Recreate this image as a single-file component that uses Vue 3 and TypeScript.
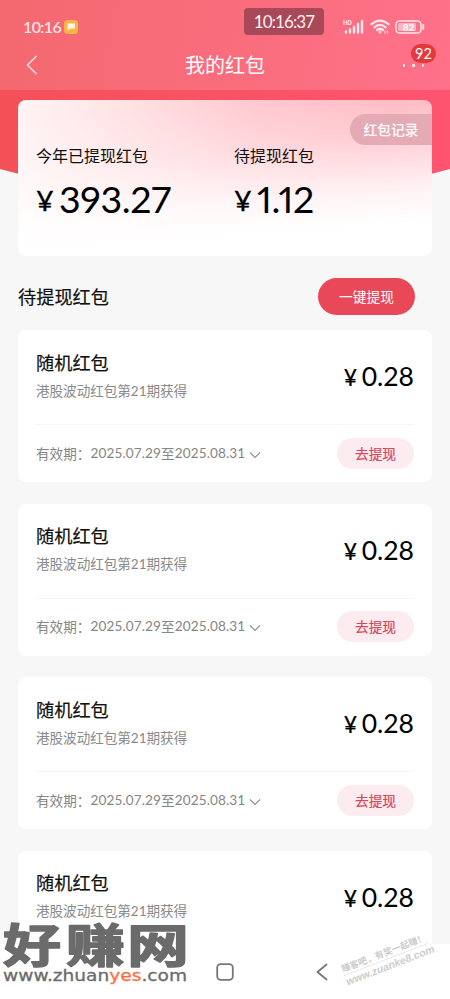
<script setup lang="ts">
import { ref } from 'vue';

type Packet = {
  id: number;
  title: string;
  source: string;
  amount: string;
  start: string;
  end: string;
};

const totals = [
  { label: '今年已提现红包', amount: '393.27' },
  { label: '待提现红包', amount: '1.12' },
];

const packets = ref<Packet[]>(
  [1, 2, 3, 4].map((id) => ({
    id,
    title: '随机红包',
    source: '港股波动红包第21期获得',
    amount: '0.28',
    start: '2025.07.29',
    end: '2025.08.31',
  }))
);

const opened = ref<number | null>(null);

const toggle = (id: number) => {
  opened.value = opened.value === id ? null : id;
};
</script>

<template>
  <div class="screen">
    <header class="header">
      <div class="status">
        <span class="status-time">10:16</span>
        <svg class="status-app" viewBox="0 0 14 14">
          <rect width="14" height="14" rx="3.5" fill="#f6b546" />
          <path d="M3.5 3.5h7.5v5H7l-3.5 2z" fill="#fff8e4" />
        </svg>
        <svg class="signal" viewBox="0 0 22 15">
          <text x="0" y="5.5" class="hd">HD</text>
          <path d="M3 12.5v1M7 10.5v3M11 8v5.5M15 5v8.5M19 2v11.5" stroke="#ffe9ee" stroke-width="2.4" stroke-linecap="round" />
        </svg>
        <svg class="wifi" viewBox="0 0 20 15">
          <g fill="none" stroke="#ffe9ee" stroke-width="2.2" stroke-linecap="round">
            <path d="M1.5 5.2Q10-2 18.5 5.2" />
            <path d="M4.3 8.3Q10 3.5 15.7 8.3" />
            <path d="M7 11Q10 8.8 13 11" />
          </g>
          <circle cx="10" cy="13" r="1.5" fill="#ffe9ee" />
          <path d="M15 11.5v3M17.5 11.5v3" stroke="#ffe9ee" />
        </svg>
        <svg class="battery" viewBox="0 0 30 14">
          <rect x="1" y="1" width="25" height="12" rx="3.5" fill="none" stroke="#ffe4ea" stroke-width="1.5" />
          <rect x="3" y="3" width="18" height="8" rx="1.5" fill="#ffb3c0" />
          <path d="M28.3 5v4" stroke="#ffe4ea" stroke-width="1.8" stroke-linecap="round" />
          <text x="13.5" y="10.6" text-anchor="middle" class="level">82</text>
        </svg>
      </div>
      <div class="clock">10:16:37</div>
      <div class="navbar">
        <svg class="back" viewBox="0 0 12 20">
          <path d="M10.5 1 1.5 10l9 9" fill="none" stroke="#ffdfe3" stroke-width="1.5" />
        </svg>
        <h1 class="title">我的红包</h1>
        <div class="more">
          <i></i><i></i><i></i>
          <span class="badge">92</span>
        </div>
      </div>
    </header>

    <main class="content">
      <svg class="backdrop" viewBox="0 0 450 96" preserveAspectRatio="none">
        <defs>
          <linearGradient id="backdropFill">
            <stop offset="0" stop-color="#f45058" />
            <stop offset="1" stop-color="#ff5470" />
          </linearGradient>
        </defs>
        <path d="M0 0H450V79Q340 109 225 109T0 79Z" fill="url(#backdropFill)" />
      </svg>

      <section class="summary">
        <button class="record">红包记录</button>
        <div v-for="total in totals" :key="total.label" class="total">
          <div class="total-label">{{ total.label }}</div>
          <div class="total-amount"><span class="yen">¥</span>{{ total.amount }}</div>
        </div>
      </section>

      <div class="section-head">
        <h2>待提现红包</h2>
        <button class="withdraw-all">一键提现</button>
      </div>

      <div class="list">
        <article v-for="item in packets" :key="item.id" class="card">
          <div class="card-main">
            <div>
              <h3>{{ item.title }}</h3>
              <p>{{ item.source }}</p>
            </div>
            <div class="amount"><span class="yen">¥</span>{{ item.amount }}</div>
          </div>
          <div class="card-foot">
            <div class="validity" @click="toggle(item.id)">
              <span>有效期：</span><span class="date">{{ item.start }}</span><span>至</span><span class="date">{{ item.end }}</span>
              <svg class="arrow" :class="{ up: opened === item.id }" viewBox="0 0 12 8">
                <path d="M1 1.5 6 6.5l5-5" fill="none" stroke="#929292" stroke-width="1.2" />
              </svg>
            </div>
            <button class="withdraw">去提现</button>
          </div>
        </article>
      </div>
    </main>

    <footer class="system-bar">
      <svg class="home" viewBox="0 0 18 18">
        <rect x="1.2" y="1.2" width="15.6" height="15.6" rx="3.5" fill="none" stroke="#777" stroke-width="1.8" />
      </svg>
      <svg class="system-back" viewBox="0 0 12 18">
        <path d="M10.5 1.5 1.5 9l9 7.5" fill="none" stroke="#777" stroke-width="1.8" stroke-linecap="round" stroke-linejoin="round" />
      </svg>
    </footer>

    <svg class="site-mark" viewBox="0 0 195 70">
      <g class="site-name">
        <text x="3" y="42" textLength="58" lengthAdjust="spacingAndGlyphs">好</text>
        <text x="66" y="42" textLength="59" lengthAdjust="spacingAndGlyphs">赚</text>
        <text x="127" y="42" textLength="62" lengthAdjust="spacingAndGlyphs">网</text>
      </g>
      <text x="3" y="60.5" textLength="184" lengthAdjust="spacingAndGlyphs" class="site-url">www.zhuan<tspan class="yes">yes</tspan>.com</text>
    </svg>

    <div class="forum-mark">
      <div class="forum-slogan">赚客吧，有奖一起赚！</div>
      <div class="forum-url">www.zuanke8.com</div>
    </div>
  </div>
</template>

<style>
body {
  margin: 0;
  overflow: hidden;
}
</style>

<style scoped>
.screen {
  position: relative;
  display: flex;
  flex-direction: column;
  width: 450px;
  height: 999px;
  overflow: hidden;
  background: #f7f7f7;
  color: #111;
  font-family: Lato, "Noto Sans CJK SC", sans-serif;
}

h1,
h2,
h3,
p {
  margin: 0;
  font-weight: 400;
}

button {
  padding: 0;
  border: 0;
  font-family: inherit;
}

.header {
  position: relative;
  flex: none;
  height: 90px;
  box-sizing: border-box;
  padding-top: 14px;
  background: linear-gradient(100deg, #f4686f, #ff7189);
}

.status {
  display: flex;
  align-items: center;
  height: 25px;
  padding: 0 25px 0 23px;
}

.status-time {
  width: 38px;
  color: #ffe9ec;
  font: 500 16px/25px Lato, sans-serif;
  letter-spacing: -0.6px;
}

.status-app {
  width: 14px;
  height: 14px;
  margin-left: 3px;
}

.signal {
  width: 22px;
  height: 15px;
  margin-left: auto;
}

.hd {
  fill: #ffe9ee;
  font: 700 6px Inter, sans-serif;
}

.wifi {
  width: 20px;
  height: 15px;
  margin: 0 5px;
}

.battery {
  width: 30px;
  height: 14px;
}

.level {
  fill: #fff;
  font: 700 9.5px Inter, sans-serif;
}

.clock {
  position: absolute;
  top: 8px;
  left: 244px;
  width: 80px;
  height: 27px;
  border-radius: 4px;
  background: #a94858;
  color: #fff0f2;
  font: 400 17px/27px Lato, sans-serif;
  letter-spacing: -0.9px;
  text-align: center;
}

.navbar {
  display: grid;
  grid-template-columns: 1fr auto 1fr;
  align-items: center;
  height: 51px;
  padding: 0 26px;
}

.back {
  width: 12px;
  height: 20px;
}

.title {
  color: #fff;
  font-size: 20px;
  line-height: 30px;
}

.more {
  position: relative;
  display: flex;
  justify-self: end;
  gap: 7px;
  margin-top: 2px;
}

.more i {
  width: 2.5px;
  height: 3px;
  border-radius: 1px;
  background: #fff0f2;
}

.badge {
  position: absolute;
  right: -12px;
  top: -20px;
  width: 25px;
  height: 19px;
  border-radius: 9.5px;
  background: #e4393c;
  color: #fff;
  font-size: 14.5px;
  line-height: 19px;
  text-align: center;
}

.content {
  position: relative;
  flex: 1;
  min-height: 0;
  padding: 10px 18px 0;
  overflow: hidden;
}

.backdrop {
  position: absolute;
  top: 0;
  left: 0;
  width: 450px;
  height: 96px;
}

.summary {
  position: relative;
  display: grid;
  grid-template-columns: 198px 1fr;
  align-items: start;
  height: 156px;
  box-sizing: border-box;
  padding: 44px 18px 0;
  border-radius: 8px;
  background:
    linear-gradient(176deg, rgba(255, 255, 255, 0) 10%, rgba(255, 255, 255, 0.3) 35%, rgba(255, 255, 255, 0.85) 65%, #fff 82%),
    linear-gradient(100deg, #fff4f4 0%, #ffe2e4 25%, #ffc8cf 55%, #ffb9c2 85%);
}

.record {
  position: absolute;
  top: 14px;
  right: 0;
  width: 82px;
  height: 31px;
  border-radius: 16px 0 0 16px;
  background: #e5abb5;
  color: #fff;
  font-size: 13.7px;
  font-weight: 500;
  line-height: 31px;
}

.total-label {
  font-size: 16px;
  line-height: 24px;
}

.total-amount {
  margin-top: 10px;
  color: #000;
  font: 400 37.5px/42px Lato, sans-serif;
  font-variant-numeric: proportional-nums;
  letter-spacing: -0.3px;
  white-space: nowrap;
}

.total-amount .yen {
  display: inline-block;
  width: 23px;
  font-size: 27px;
  vertical-align: 2px;
  line-height: 1;
  -webkit-text-stroke: 0.4px #000;
}

.section-head {
  display: flex;
  align-items: center;
  justify-content: space-between;
  height: 37px;
  margin-top: 22px;
  padding-right: 17px;
}

.section-head h2 {
  margin-top: -2px;
  font-size: 18.2px;
  -webkit-text-stroke: 0.2px #111;
}

.withdraw-all {
  width: 97px;
  height: 37px;
  padding-bottom: 2px;
  border-radius: 19px;
  background: #e94858;
  color: #fff;
  font-size: 13.7px;
}

.list {
  display: flex;
  flex-direction: column;
  gap: 21.5px;
  margin-top: 15px;
}

.card {
  flex: none;
  height: 152px;
  box-sizing: border-box;
  padding: 0 18px;
  border-radius: 8px;
  background: #fff;
}

.card-main {
  display: flex;
  align-items: center;
  justify-content: space-between;
  height: 95px;
  box-sizing: border-box;
  padding-bottom: 1px;
  border-bottom: 1px solid #f5f5f5;
}

.card-main h3 {
  font-size: 18.2px;
  line-height: 28px;
  -webkit-text-stroke: 0.2px #111;
}

.card-main p {
  color: #8a8a8a;
  font-size: 13.6px;
  letter-spacing: -0.05px;
  line-height: 28px;
}

.amount {
  color: #000;
  font: 400 26.5px/40px Lato, sans-serif;
}

.amount .yen {
  display: inline-block;
  width: 18px;
  font-size: 23px;
  -webkit-text-stroke: 0.2px #000;
}

.card-foot {
  display: flex;
  align-items: center;
  justify-content: space-between;
  height: 56px;
}

.validity {
  display: flex;
  align-items: center;
  padding-bottom: 1px;
  color: #858585;
  font-size: 13.6px;
  cursor: pointer;
}

.date {
  letter-spacing: 0.12px;
}

.arrow {
  width: 12px;
  height: 8px;
  margin: 4px 0 0 4px;
}

.arrow.up {
  transform: rotate(180deg);
}

.withdraw {
  width: 77px;
  height: 31px;
  padding-bottom: 1px;
  border-radius: 16px;
  background: #fdecef;
  color: #d24960;
  font-size: 13.7px;
  -webkit-text-stroke: 0.2px #d24960;
}

.system-bar {
  display: flex;
  flex: none;
  align-items: center;
  height: 55px;
  padding-left: 216px;
  background: #fff;
}

.home {
  width: 18px;
  height: 18px;
}

.system-back {
  width: 12px;
  height: 18px;
  margin-left: 82px;
}

.site-mark {
  position: absolute;
  left: 0;
  top: 920px;
  width: 195px;
  height: 70px;
}

.site-name {
  fill: #6b6b6b;
  stroke: #6b6b6b;
  stroke-width: 1.5;
  stroke-linejoin: round;
  font: 700 46px "Noto Sans CJK SC", sans-serif;
}

.site-url {
  fill: #6b6b6b;
  font: 400 16px "DejaVu Sans", sans-serif;
  stroke: #6b6b6b;
  stroke-width: 0.3;
}

.site-url .yes {
  fill: #ff6e45;
  stroke: #ff6e45;
}

.forum-mark {
  position: absolute;
  left: 341px;
  top: 946px;
  width: 90px;
  color: #cdcdcd;
  transform: rotate(-21deg);
  white-space: nowrap;
}

.forum-slogan {
  border-bottom: 1px solid #e4e4e4;
  font-size: 9px;
  font-weight: 700;
  line-height: 13px;
}

.forum-url {
  font: italic 700 10.6px/13px "Liberation Sans", sans-serif;
}
</style>
